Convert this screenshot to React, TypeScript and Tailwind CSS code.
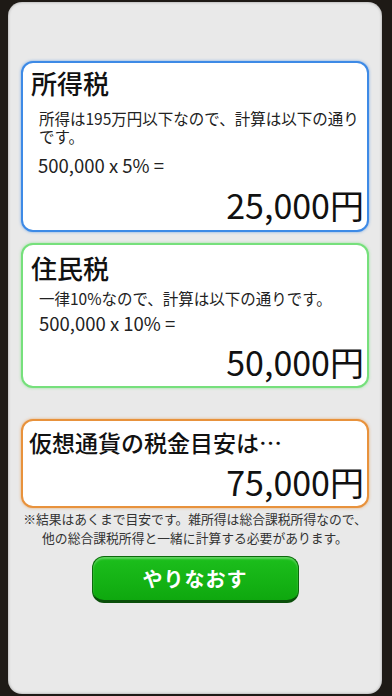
import React from 'react';

const font = "font-['Noto_Sans_CJK_JP','Noto_Sans_CJK_SC',sans-serif]";

export default function App() {
  return (
    <div className={`w-[392px] h-[696px] bg-[#1e1a16] pt-[2px] pl-[8px] pr-[10px] pb-[2px] ${font}`}>
      <div className="h-full rounded-[14px] bg-[#e9e9e9] shadow-[inset_0_0_3px_rgba(0,0,0,0.35)] px-[13px] pt-[59px] flex flex-col">
        {/* 所得税 */}
        <div className="h-[171px] rounded-[12px] border-2 border-[#3d8ae6] bg-white shadow-[0_0_3px_rgba(61,138,230,0.7)] pt-[5px] pl-[8px] pr-[3px]">
          <h2 className="text-[26px] leading-[30px] font-medium text-[#111]">所得税</h2>
          <p className="mt-[11px] ml-[8px] text-[15.5px] leading-[18px] text-[#222]">
            所得は195万円以下なので、計算は以下の通りです。
          </p>
          <p className="mt-[10px] ml-[7px] text-[18.5px] leading-[20px] text-[#222]">500,000 x 5% =</p>
          <p className="mt-[10px] text-right text-[34px] leading-[40px] text-[#111]">25,000円</p>
        </div>

        {/* 住民税 */}
        <div className="mt-[11px] h-[145px] rounded-[12px] border-2 border-[#76e07c] bg-white shadow-[0_0_3px_rgba(118,224,124,0.7)] pt-[8px] pl-[8px] pr-[3px]">
          <h2 className="text-[26px] leading-[30px] font-medium text-[#111]">住民税</h2>
          <p className="mt-[6px] ml-[8px] text-[15.5px] leading-[18px] text-[#222]">一律10%なので、計算は以下の通りです。</p>
          <p className="mt-[6px] ml-[8px] text-[18.5px] leading-[20px] text-[#222]">500,000 x 10% =</p>
          <p className="mt-[9px] text-right text-[34px] leading-[40px] text-[#111]">50,000円</p>
        </div>

        {/* 合計 */}
        <div className="mt-[31px] h-[89px] rounded-[12px] border-2 border-[#e8923c] bg-white shadow-[0_0_3px_rgba(232,146,60,0.7)] pt-[7px] pl-[6px] pr-[3px]">
          <h2 className="text-[23px] leading-[28px] font-medium text-[#111]">仮想通貨の税金目安は…</h2>
          <p className="mt-[6px] text-right text-[34px] leading-[40px] text-[#111]">75,000円</p>
        </div>

        <p className="mt-[1px] -mx-[8px] whitespace-nowrap text-center text-[12.8px] leading-[19px] text-[#333]">
          ※結果はあくまで目安です。雑所得は総合課税所得なので、
          <br />
          他の総合課税所得と一緒に計算する必要があります。
        </p>

        <div className="mt-[9px] flex justify-center">
          <button className="w-[207px] h-[47px] rounded-[12px] border border-[#0b6a0b] border-b-[3px] border-b-[#0a4f0a] bg-gradient-to-b from-[#1cbf1c] to-[#0ea80e] text-white text-[20px] font-bold tracking-[1px] shadow-[inset_0_2px_2px_rgba(255,255,255,0.3)]">
            やりなおす
          </button>
        </div>
      </div>
    </div>
  );
}
